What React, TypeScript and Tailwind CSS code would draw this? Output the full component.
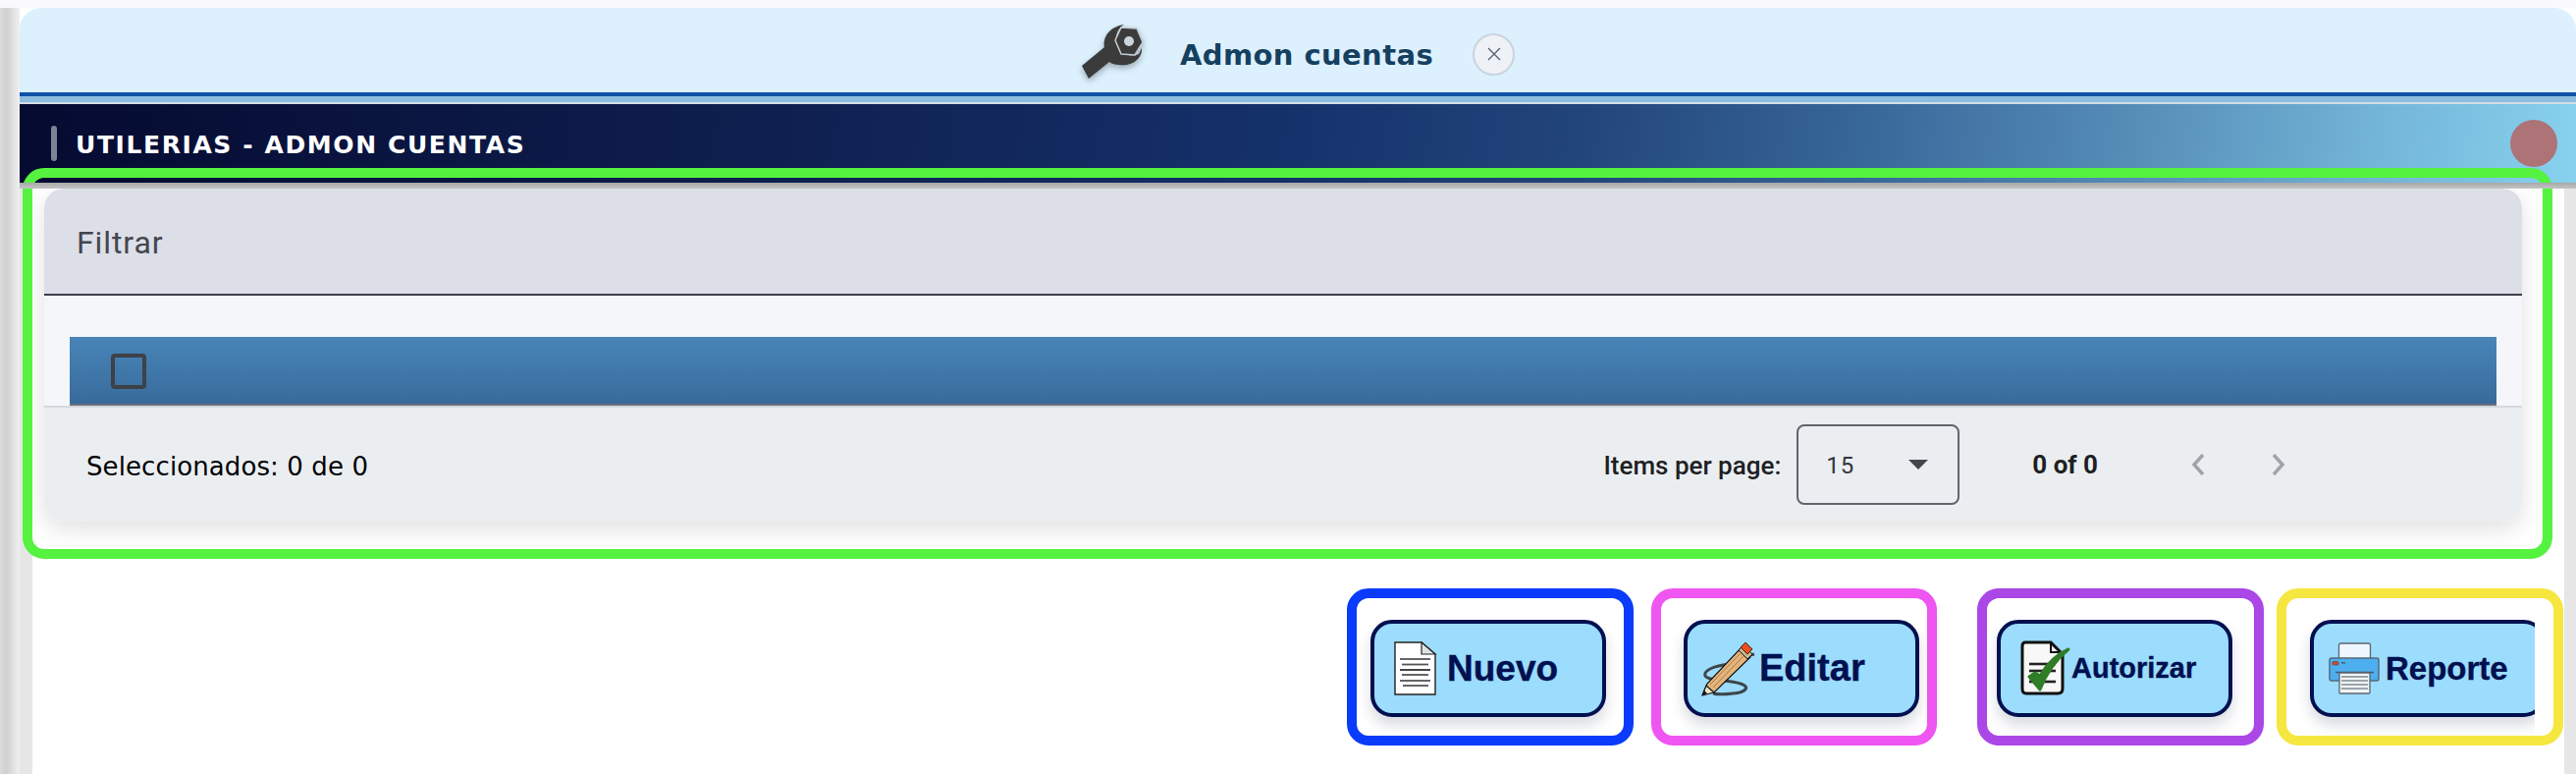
import React from 'react';

const WrenchIcon = () => (
  <svg viewBox="0 0 90 75" className="absolute left-[-11px] top-[-9px] h-[75px] w-[90px] drop-shadow-[0_3px_3px_rgba(0,0,0,0.3)]">
    <path
      d="M12 52 L35 33 C33 22 41 12 55 10 C47 15 45 24 48 32 C52 40 63 44 70 40 L73 34 C74 45 62 53 50 51 C46 51 42 50 40 48 L19 65 Z"
      fill="#3b3b3b"
    />
    <polygon points="52,13 68,14 74,28 66,41 52,40 46,26" fill="#3b3b3b" stroke="#c3ccd3" strokeWidth="1.5" />
    <circle cx="60" cy="27" r="5" fill="#cdd5db" />
  </svg>
);

const DocIcon = () => (
  <svg viewBox="0 0 70 70" className="h-[70px] w-[70px] shrink-0">
    <path d="M9 8 H36 L50 20 V61 H9 Z" fill="#fff" stroke="#222" strokeWidth="1.4" />
    <path d="M36 8 L50 20 H36 Z" fill="#dfe3e6" stroke="#222" strokeWidth="1.2" />
    <g stroke="#555" strokeWidth="1.8">
      <path d="M14 25 H45" />
      <path d="M16 30.5 H43" />
      <path d="M14 36 H45" stroke="#333" />
      <path d="M16 41 H43" />
      <path d="M14 47 H45" />
      <path d="M17 52 H43" />
    </g>
  </svg>
);

const PencilIcon = () => (
  <svg viewBox="0 0 70 70" className="h-[70px] w-[70px] shrink-0">
    <path
      d="M62 20 C52 22 44 26 36 30 C22 32 10 36 12 42 C14 47 34 46 48 50 C58 53 54 59 40 60 C32 61 24 61 20 60"
      fill="none"
      stroke="#2c2c2c"
      strokeWidth="3"
      opacity="0.85"
    />
    <polygon points="10,60 14,50 48,14 58,23 21,59" fill="#e3b47c" stroke="#111" strokeWidth="1.2" />
    <path d="M17 51 L50 17 M20 54 L53 20" stroke="#a97a44" strokeWidth="1" />
    <polygon points="46,16 51,11 60,20 55,25" fill="#c9b58c" stroke="#111" strokeWidth="1" />
    <polygon points="48,13 53,8 60,15 55,20" fill="#ee4d1f" stroke="#111" strokeWidth="0.8" />
    <polygon points="9,62 13,52 21,59" fill="#efe4c4" stroke="#111" strokeWidth="1.2" />
    <polygon points="9,62 11,57 14,60" fill="#111" />
  </svg>
);

const AuthIcon = () => (
  <svg viewBox="0 0 70 70" className="h-[70px] w-[70px] shrink-0">
    <path d="M12 8 H38 L50 20 V55 Q50 60 45 60 H13 Q9 60 9 55 V12 Q9 8 12 8 Z" fill="#f8f8f8" stroke="#111" strokeWidth="3" />
    <path d="M38 9 V18 H49" fill="none" stroke="#111" strokeWidth="2" />
    <g stroke="#222" strokeWidth="2.6">
      <path d="M16 30 H43" />
      <path d="M16 37 H43" />
      <path d="M16 48 H43" />
    </g>
    <path d="M16 43 L27 56 C33 40 44 25 56 15 C44 20 35 29 27 42 L22 39 Z" fill="#2f7d26" stroke="#2f7d26" strokeWidth="3" strokeLinejoin="round" />
  </svg>
);

const PrinterIcon = () => (
  <svg viewBox="0 0 70 70" className="h-[70px] w-[70px] shrink-0">
    <rect x="17.5" y="9" width="32" height="20" rx="2" fill="#edf7fd" stroke="#5b6670" strokeWidth="1.3" />
    <rect x="8" y="24" width="50" height="23" rx="2" fill="#4dafef" stroke="#56697a" strokeWidth="1.5" />
    <rect x="11" y="27.5" width="6" height="3.5" rx="1" fill="#d2492f" stroke="#59432f" strokeWidth="0.6" />
    <rect x="20" y="28" width="4" height="1.6" fill="#4c5f6e" />
    <path d="M14 38.5 H53" stroke="#45586a" strokeWidth="1.4" />
    <rect x="18" y="39" width="31" height="21" rx="1" fill="#f1f4f5" stroke="#5b6670" strokeWidth="1.3" />
    <g stroke="#6d7a80" strokeWidth="1.3">
      <path d="M20 43 H47" />
      <path d="M20 47 H47" />
      <path d="M20 51 H47" />
      <path d="M20 55 H47" />
    </g>
  </svg>
);

const ActionButton = ({ icon, label, padClass, textClass }: { icon: React.ReactNode; label: string; padClass: string; textClass: string }) => (
  <button className={`flex h-[99px] w-[240px] shrink-0 items-center rounded-[22px] border-[4px] border-[#001050] bg-[#9cdcfd] shadow-[0_8px_14px_rgba(40,50,90,0.18)] ${padClass}`}>
    {icon}
    <span className={`font-['Liberation_Sans',sans-serif] font-bold text-[#001050] [-webkit-text-stroke:0.4px_#001050] ${textClass}`}>
      {label}
    </span>
  </button>
);

export default function App() {
  return (
    <div className="relative flex h-[788px] w-[2624px] overflow-hidden bg-white">
      {/* left gutter */}
      <div className="flex w-5 shrink-0 flex-col">
        <div className="h-2 bg-[#f9f9fe]" />
        <div className="flex-1 bg-gradient-to-r from-[#dcdcdc] via-[#d0d0d0] via-30% to-[#f0f0f2]" />
      </div>

      <div className="flex min-w-0 flex-1 flex-col">
        <div className="h-2 shrink-0 bg-[#f9f9fe]" />

        {/* title strip */}
        <div className="flex h-[86px] shrink-0 items-center justify-center rounded-t-[22px] bg-[#dcf0fd]">
          <div className="relative mr-[37px] h-[55px] w-[64px]">
            <WrenchIcon />
          </div>
          <span className="mt-[12px] font-['DejaVu_Sans',sans-serif] text-[29px] font-bold tracking-[0.4px] text-[#15405f]">
            Admon cuentas
          </span>
          <button className="ml-[40px] mt-[8px] flex h-[43px] w-[43px] items-center justify-center rounded-full border-2 border-[#cbd3de] bg-[#eef2f7]">
            <svg viewBox="0 0 16 16" className="h-[16px] w-[16px]" fill="none" stroke="#5c6576" strokeWidth="1.4">
              <path d="M2 2 L14 14 M14 2 L2 14" />
            </svg>
          </button>
        </div>
        <div className="h-1 shrink-0 bg-[#0f52a8]" />
        <div className="h-[6px] shrink-0 bg-[#8dbde0]" />
        <div className="h-[2px] shrink-0 bg-[#d4dde6]" />

        {/* module bar */}
        <div className="flex h-20 shrink-0 items-center justify-between bg-[linear-gradient(97deg,#050a30_0%,#0f2050_30%,#15326c_50%,#22457c_61%,#38679a_72%,#5a93bc_84%,#73b5d8_92%,#88d2ee_100%)] pl-[32px] pr-[19px]">
          <div className="flex items-center">
            <div className="h-9 w-[6px] rounded-full bg-[#7d8296]" />
            <span className="ml-[19px] mt-[3px] font-['DejaVu_Sans',sans-serif] text-[25px] font-bold tracking-[1.6px] text-white">
              UTILERIAS - ADMON CUENTAS
            </span>
          </div>
          <div className="h-12 w-12 rounded-full bg-[#ad7377]" />
        </div>

        {/* body */}
        <div className="relative flex min-h-0 flex-1 bg-white">
          <div className="pointer-events-none absolute inset-x-0 top-0 z-10 h-[6px] bg-gradient-to-b from-[#a8a8a8] to-[#c4c4c4]" />
          <div className="w-[13px] shrink-0 bg-[#e6e6e6]" />
          <div className="min-w-0 flex-1 pl-3 pr-[43px] pt-[6px]">
            {/* card */}
            <div className="rounded-[20px] shadow-[0_8px_24px_rgba(0,0,0,0.12)]">
              <div className="flex h-[109px] items-center rounded-t-[20px] border-b-2 border-[#3d3d4a] bg-[#dcdfe8] pl-[33px]">
                <span className="mt-[3px] font-['Roboto',sans-serif] text-[32px] tracking-[0.9px] text-[#44464f]">Filtrar</span>
              </div>
              <div className="bg-[#f4f6fa] px-[26px] pt-[42px]">
                <div className="flex h-[70px] items-center bg-gradient-to-b from-[#4885b8] to-[#386a9b] pl-[42px] shadow-[inset_0_-2px_0_#6a6f78]">
                  <div className="h-9 w-9 rounded-[4px] border-[4px] border-[#3d4148]" />
                </div>
              </div>
              <div className="flex h-[118px] items-center rounded-b-[20px] border-t-2 border-[#d5d9de] bg-[#ebeef1] pl-[43px]">
                <span className="mt-[4px] font-['DejaVu_Sans',sans-serif] text-[26px] tracking-[0.1px] text-black">Seleccionados: 0 de 0</span>
                <div className="ml-auto flex items-center font-['Roboto',sans-serif] text-[#1e1f23]">
                  <span className="mt-[3px] text-[26px] font-medium">Items per page:</span>
                  <div className="ml-[16px] flex h-[82px] w-[166px] items-center justify-between rounded-[8px] border-2 border-[#62656c] pl-[28px] pr-[30px]">
                    <span className="mt-[2px] text-[24px] tracking-[1px] text-[#33353a]">15</span>
                    <div className="h-0 w-0 border-x-[10px] border-t-[10px] border-x-transparent border-t-[#44464c]" />
                  </div>
                  <span className="ml-[74px] mt-[1px] text-[26px] font-bold">0 of 0</span>
                  <svg viewBox="0 0 14 22" className="ml-[95px] h-[22px] w-[14px]" fill="none" stroke="#a0a3a8" strokeWidth="3.5">
                    <path d="M12 1 L3 11 L12 21" />
                  </svg>
                  <svg viewBox="0 0 14 22" className="ml-[68px] mr-[241px] h-[22px] w-[14px]" fill="none" stroke="#a0a3a8" strokeWidth="3.5">
                    <path d="M2 1 L11 11 L2 21" />
                  </svg>
                </div>
              </div>
            </div>

            {/* actions */}
            <div className="mr-[-13px] mt-[100px] flex gap-[79px] overflow-hidden pb-6 pl-[1351px] pr-0">
              <ActionButton icon={<DocIcon />} label="Nuevo" padClass="pl-[12px]" textClass="-ml-[8px] text-[37px]" />
              <ActionButton icon={<PencilIcon />} label="Editar" padClass="pl-[6px]" textClass="-ml-[3px] text-[38px]" />
              <ActionButton icon={<AuthIcon />} label="Autorizar" padClass="pl-[13px]" textClass="-ml-[11px] text-[29px]" />
              <ActionButton icon={<PrinterIcon />} label="Reporte" padClass="pl-[8px]" textClass="-ml-[5px] text-[33px]" />
            </div>
          </div>
          <div className="w-3 shrink-0 bg-[#e6e6e6]" />
        </div>
      </div>

      {/* highlight rings drawn over the page */}
      <div className="pointer-events-none absolute left-[23px] top-[171px] h-[398px] w-[2577px] rounded-[22px] border-[10px] border-[#55f23f]" />
      <div className="pointer-events-none absolute left-[1372px] top-[599px] h-[160px] w-[292px] rounded-[22px] border-[10px] border-[#0a3bfa]" />
      <div className="pointer-events-none absolute left-[1682px] top-[599px] h-[160px] w-[291px] rounded-[22px] border-[10px] border-[#ef56f1]" />
      <div className="pointer-events-none absolute left-[2014px] top-[599px] h-[160px] w-[292px] rounded-[22px] border-[10px] border-[#ab47e6]" />
      <div className="pointer-events-none absolute left-[2319px] top-[599px] h-[160px] w-[292px] rounded-[22px] border-[10px] border-[#f6e640]" />
    </div>
  );
}
